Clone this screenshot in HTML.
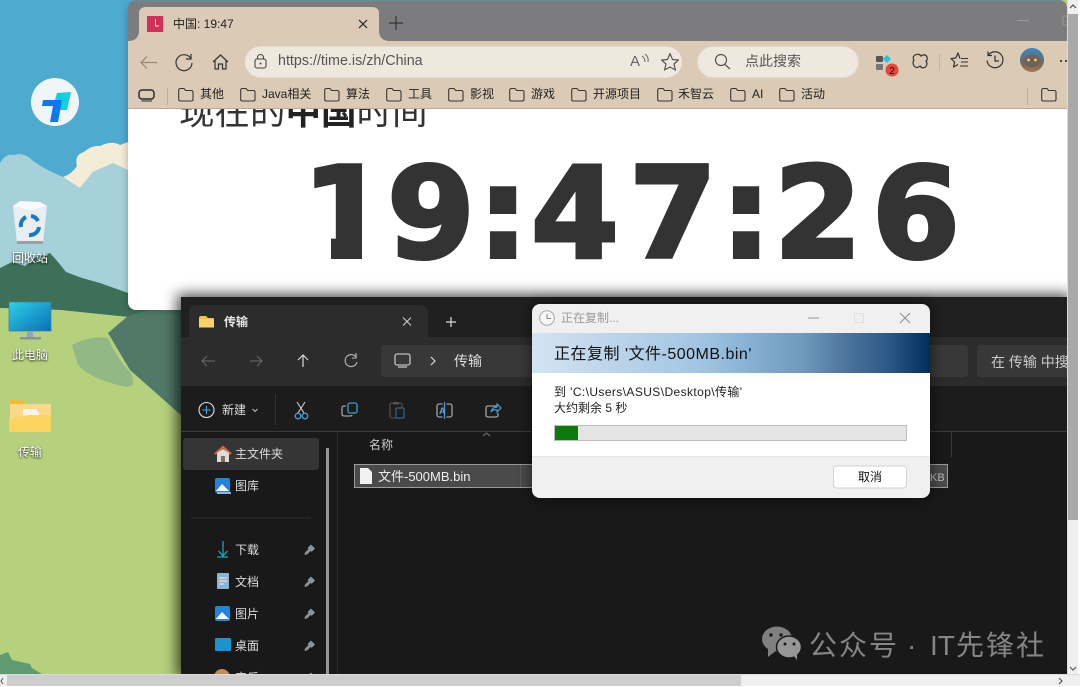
<!DOCTYPE html>
<html><head><meta charset="utf-8"><style>
html,body{margin:0;padding:0;background:#eee;overflow:hidden}
svg{display:block}
text{font-family:"Liberation Sans","Noto Sans CJK SC",sans-serif}
.d{font-family:"DejaVu Sans",sans-serif}
</style></head><body>
<svg xmlns="http://www.w3.org/2000/svg" width="1080" height="687" viewBox="0 0 1080 687">
<defs>
<linearGradient id="band" x1="0" y1="0" x2="1" y2="0"><stop offset="0" stop-color="#d4e3f2"/><stop offset=".2" stop-color="#bcd4ea"/><stop offset=".42" stop-color="#a3c5e3"/><stop offset=".52" stop-color="#8cb5d8"/><stop offset=".68" stop-color="#6f99bd"/><stop offset=".8" stop-color="#4a7299"/><stop offset=".9" stop-color="#2a5886"/><stop offset="1" stop-color="#002d5c"/></linearGradient>
<linearGradient id="mon" x1="0" y1="0" x2="1" y2="1"><stop offset="0" stop-color="#2ed0e6"/><stop offset="1" stop-color="#0a6fb8"/></linearGradient>
<linearGradient id="ava" x1="0" y1="0" x2="0" y2="1"><stop offset="0" stop-color="#3b86c9"/><stop offset=".6" stop-color="#6d6a5f"/><stop offset="1" stop-color="#a9744a"/></linearGradient>
<clipPath id="win"><rect x="0" y="0" width="1067" height="674"/></clipPath>
<clipPath id="brw"><rect x="128" y="0" width="939" height="310" rx="8"/></clipPath>
<clipPath id="cnt"><rect x="128" y="109" width="939" height="188"/></clipPath>
<clipPath id="exp"><rect x="181" y="297" width="886" height="377"/></clipPath>
<clipPath id="one"><polygon points="295,145 362,145 362,270 331,270 331,195 295,195"/></clipPath>
<clipPath id="dlg"><rect x="532" y="304" width="398" height="194" rx="8"/></clipPath>
<filter id="ds" x="-20%" y="-20%" width="140%" height="140%"><feGaussianBlur stdDeviation="6"/></filter>
<filter id="es" x="-10%" y="-20%" width="120%" height="140%"><feGaussianBlur stdDeviation="7"/></filter>
<filter id="bs" x="-10%" y="-10%" width="120%" height="120%"><feGaussianBlur stdDeviation="4"/></filter>
<filter id="ts" x="-20%" y="-40%" width="140%" height="180%"><feGaussianBlur stdDeviation="1"/></filter>
<g id="fold"><path d="M.7 3.2Q.7 1.5 2.4 1.5H6L7.6 3.5H13.3Q15 3.5 15 5.2V12.3Q15 14 13.3 14H2.4Q.7 14 .7 12.3Z" fill="none" stroke="#3a3631" stroke-width="1.1"/></g>
<g id="pin"><path d="M3 9.5L6.5 6 5.8 4.8 9 1.5 13 5.5 9.8 8.7 8.6 8 5 11.5 2.5 12Z" fill="#8c939b"/></g>
</defs>

<!-- wallpaper -->
<g clip-path="url(#win)">
<rect width="1067" height="674" fill="#b5d17e"/>
<rect width="190" height="300" fill="#4faad0"/>
<path d="M0 163Q6 153 14 155 24 152 32 160 42 168 63 177L80 188 93 172 113 163 190 168V320H0Z" fill="#a6d1da"/>
<path d="M63 177Q72 174 77 166 74 155 84 152 92 145 100 146 112 140 120 145L128 142 135 172 128 170 113 163 93 172 80 188Z" fill="#f3ecd6"/>
<path d="M0 268L12 262 25 266 34 258 50 253 58 262 66 272 82 278 100 283 128 293 190 298V330L128 317 60 310 0 308Z" fill="#3e6f58"/>
<path d="M0 308L60 310 128 317 108 333 130 370 180 415V690H0Z" fill="#b5d17e"/>
<path d="M108 333L128 316 182 300V416L130 370Z" fill="#517869"/>
<path d="M72 345Q92 335 108 338 118 360 130 372 140 392 118 385 90 378 78 365Z" fill="#93b886"/>
<path d="M0 674V655L8 652 12 660 30 664 35 674ZM22 674L32 668 42 674Z" fill="#5f9a72"/>
<rect x="128" y="4" width="939" height="306" rx="8" fill="#000" opacity=".28" filter="url(#bs)"/>

<!-- desktop icons -->
<circle cx="55" cy="102" r="24" fill="#f0f6f8"/>
<path d="M57 93L71 92 67 110 60 110 62 100 55 100Z" fill="#10cfe0"/>
<path d="M42 106L43 100 62 100 58 122 50 122 53 106Z" fill="#0b78f0"/>

<path d="M13 206L47 206 43 243H17Z" fill="#e9eef2"/><path d="M13 206L20 201 40 202 47 206 30 210Z" fill="#fafafa"/>
<rect x="17" y="241" width="26" height="3" fill="#9aa0a2"/>
<g fill="none" stroke="#1a7ac8" stroke-width="4"><path d="M21 227A9 9 0 0 1 26 217"/><path d="M31 216A9 9 0 0 1 38 221"/><path d="M39 227A9 9 0 0 1 29 235"/></g>
<text x="30" y="263" text-anchor="middle" font-size="12" fill="#000" filter="url(#ts)">回收站</text>
<text x="30" y="262" text-anchor="middle" font-size="12" fill="#fff">回收站</text>

<rect x="9" y="302" width="42" height="29" fill="url(#mon)" stroke="#3c7f9a" stroke-width=".7"/>
<rect x="27" y="331" width="6" height="7" fill="#8fa8b0"/><rect x="20" y="337" width="21" height="2.5" fill="#8a9396"/>
<text x="30" y="360" text-anchor="middle" font-size="12" fill="#000" filter="url(#ts)">此电脑</text>
<text x="30" y="359" text-anchor="middle" font-size="12" fill="#fff">此电脑</text>

<path d="M9 402Q9 400 11 400H22L26 404H49Q51 404 51 406V415H9Z" fill="#f3b93b"/>
<rect x="10" y="404" width="41" height="20" fill="#fbd98a"/>
<path d="M23 409H36L39 413V419H23Z" fill="#f7f4f0"/>
<path d="M9 419Q20 416 30 415L51 415V431Q51 432 49 432H11Q9 432 9 430Z" fill="#fdd460"/>
<text x="30" y="457" text-anchor="middle" font-size="12" fill="#000" filter="url(#ts)">传输</text>
<text x="30" y="456" text-anchor="middle" font-size="12" fill="#fff">传输</text>

<!-- browser -->
<g clip-path="url(#brw)">
<rect x="128" y="0" width="939" height="42" fill="#7c7c7e"/>
<rect x="128" y="0" width="939" height="1.5" fill="#6a8a94"/>
<path d="M128 41Q138 41 139 32V14Q139 7 146 7H372Q379 7 379 14V32Q380 41 390 41V109H128Z" fill="#dbcab5"/>
<rect x="128" y="41" width="939" height="67" fill="#dbcab5"/>
<rect x="128" y="108" width="939" height="1.5" fill="#b9a995"/>
<rect x="128" y="109" width="939" height="201" fill="#fff"/>
</g>
<rect x="147" y="16" width="16" height="16" fill="#d1305a"/>
<path d="M155.5 19V26H159" fill="none" stroke="#f5d9a0" stroke-width="1"/>
<text x="173" y="28" font-size="12" fill="#222">中国: 19:47</text>
<path d="M359 20L367 28M367 20L359 28" stroke="#222" stroke-width="1.2"/>
<path d="M396 16V30M389 23H403" stroke="#333" stroke-width="1.2"/>

<path d="M157 62.5H141M147 56.5L141 62.5 147 68.5" fill="none" stroke="#95897c" stroke-width="1.2"/>
<path d="M190.5 58A8 8 0 1 0 192 63M191 54V59H186" fill="none" stroke="#333" stroke-width="1.2"/>
<path d="M213 62L220.5 55 228 62M215 60.5V69H218.5V64H222.5V69H226V60.5" fill="none" stroke="#333" stroke-width="1.2" stroke-linejoin="round"/>
<rect x="245" y="46.500" width="437" height="31" rx="15.500" fill="#efe8de"/>
<rect x="255" y="59" width="11" height="9" rx="2" fill="none" stroke="#444" stroke-width="1.1"/>
<path d="M257.500 59V57.500A3 3 0 0 1 263.500 57.500V59" fill="none" stroke="#444" stroke-width="1.1"/><circle cx="260.500" cy="63.500" r="1" fill="#444"/>
<text x="278" y="65" font-size="14.300" fill="#555">https://time.is/zh/China</text>
<text x="630" y="66" font-size="15" fill="#666">A</text>
<path d="M642 56Q645 58 645 62M645 54Q649 57 648 62" fill="none" stroke="#666"/>
<path d="M670 53.500L672.500 59.500 678.500 60 674 64 675.500 70 670 67 664.500 70 666 64 661.500 60 667.500 59.500Z" fill="none" stroke="#555" stroke-width="1.200" stroke-linejoin="round"/>
<rect x="697.500" y="46.500" width="161" height="31" rx="15.500" fill="#efe8de" stroke="#e3d8ca"/>
<circle cx="721" cy="60" r="5.500" fill="none" stroke="#555" stroke-width="1.200"/><path d="M725 64.500L730 69" stroke="#555" stroke-width="1.200"/>
<text x="745" y="66" font-size="14" fill="#555">点此搜索</text>
<rect x="876" y="56" width="7" height="6" rx="1" fill="#555"/><rect x="876" y="64" width="7" height="6" rx="1" fill="#777"/>
<path d="M887 55L891 59 887 63 883 59Z" fill="#1cc4e8"/>
<circle cx="892" cy="70" r="6.500" fill="#e8453c"/><text x="892" y="74" text-anchor="middle" font-size="10" fill="#111">2</text>
<path d="M915 55Q919 53 921 56 925 53 927 57 928 60 926 61 928 64 925.500 67 922 69 920 66 917 69 914 66 912 62 914 60.500 912 57 915 55Z" fill="none" stroke="#333" stroke-width="1.200"/>
<rect x="939" y="54" width="1" height="17" fill="#c4b5a2"/>
<path d="M960 58.500L958 53 955.800 58 951 58.600 954.600 62 953.500 67 958 64.500" fill="none" stroke="#333" stroke-width="1.200" stroke-linejoin="round"/><path d="M961 58.500H968M961 62H968M960 66H968" stroke="#333"/>
<path d="M988.500 55A8 8 0 1 1 987 60.500M988 51.500V55.500H992" fill="none" stroke="#333" stroke-width="1.200"/>
<path d="M995 55.500V61H999" fill="none" stroke="#333" stroke-width="1.200"/>
<circle cx="1032" cy="60" r="12" fill="url(#ava)"/><ellipse cx="1032" cy="61" rx="8" ry="6.500" fill="#6f6254"/><circle cx="1028.500" cy="60" r="1.400" fill="#e8d36a"/><circle cx="1035.500" cy="60" r="1.400" fill="#e8d36a"/>
<circle cx="1061" cy="61" r="1" fill="#222"/><circle cx="1066" cy="61" r="1" fill="#222"/>
<path d="M1017 20.500H1029" stroke="#999"/><rect x="1063" y="16" width="8" height="9" fill="none" stroke="#999"/>

<rect x="139" y="90" width="15" height="9" rx="3" fill="none" stroke="#2a2a2a" stroke-width="1.500"/><path d="M141.500 101H152" stroke="#2a2a2a"/>
<rect x="167" y="88" width="1" height="17" fill="#bfb09c"/>
<g font-size="12" fill="#222">
<use href="#fold" x="178" y="87"/><text x="200" y="98">其他</text>
<use href="#fold" x="240" y="87"/><text x="262" y="98">Java相关</text>
<use href="#fold" x="324" y="87"/><text x="346" y="98">算法</text>
<use href="#fold" x="386" y="87"/><text x="408" y="98">工具</text>
<use href="#fold" x="448" y="87"/><text x="470" y="98">影视</text>
<use href="#fold" x="509" y="87"/><text x="531" y="98">游戏</text>
<use href="#fold" x="571" y="87"/><text x="593" y="98">开源项目</text>
<use href="#fold" x="657" y="87"/><text x="678" y="98">禾智云</text>
<use href="#fold" x="730" y="87"/><text x="752" y="98">AI</text>
<use href="#fold" x="779" y="87"/><text x="801" y="98">活动</text>
<rect x="1027" y="88" width="1" height="17" fill="#bfb09c"/>
<use href="#fold" x="1041" y="87"/>
</g>

<!-- page content -->
<g clip-path="url(#cnt)">
<text x="179" y="124" font-size="35.500" fill="#333">现在的<tspan font-weight="700" fill="#222">中国</tspan>时间</text>
<g fill="#333" stroke="#333" stroke-width="4" font-size="126" font-weight="700" text-anchor="middle">
<g clip-path="url(#one)"><text class="d" transform="translate(346 257)">1</text></g>
<text class="d" transform="translate(431 257)">9</text>
<text class="d" transform="translate(503 257)">:</text>
<text class="d" transform="translate(575 257)">4</text>
<text class="d" transform="translate(673 257)">7</text>
<text class="d" transform="translate(746 257)">:</text>
<text class="d" transform="translate(818 257)">2</text>
<text class="d" transform="translate(916 257)">6</text>
</g>
</g>

<!-- explorer shadow -->
<rect x="177" y="294" width="894" height="384" fill="#000" opacity=".7" filter="url(#es)"/>
</g>

<!-- explorer -->
<g clip-path="url(#exp)">
<rect x="181" y="297" width="886" height="377" fill="#191919"/>
<rect x="181" y="297" width="886" height="40" fill="#202020"/>
<path d="M189 337V313Q189 305 197 305H420Q428 305 428 313V337Z" fill="#2c2c2c"/>
<rect x="181" y="337" width="886" height="49" fill="#2c2c2c"/>
<rect x="181" y="386" width="886" height="45" fill="#1c1c1c"/>
<rect x="181" y="431" width="886" height="1" fill="#3a3a3a"/>
<path d="M199 318Q199 316 201 316H206L208 318H213Q214 318 214 319V327H199Z" fill="#f4c04d"/><rect x="199" y="319" width="15" height="8.500" fill="#fad368"/>
<text x="224" y="326" font-size="12" font-weight="700" fill="#e6e6e6">传输</text>
<path d="M403 317.500L411 325.500M411 317.500L403 325.500" stroke="#ccc" stroke-width="1.100"/>
<path d="M451 317V327M446 322H456" stroke="#ddd" stroke-width="1.200"/>
<path d="M215 361H202M207 356L202 361 207 366" fill="none" stroke="#6a6a6a" stroke-width="1.100"/>
<path d="M250 361H262M257 356L262 361 257 366" fill="none" stroke="#6a6a6a" stroke-width="1.100"/>
<path d="M303 367V355M298 360L303 355 308 360" fill="none" stroke="#d8d8d8" stroke-width="1.200"/>
<path d="M356 357A6 6 0 1 0 357 362M356 353V358H352" fill="none" stroke="#bbb" stroke-width="1.100"/>
<rect x="381" y="345" width="587" height="32" rx="4" fill="#383838"/>
<rect x="977" y="345" width="92" height="32" rx="4" fill="#383838"/>
<rect x="395" y="354" width="15" height="11" rx="2" fill="none" stroke="#ddd" stroke-width="1.100"/><path d="M398 367H407" stroke="#ddd" stroke-width="1.100"/>
<path d="M431 357L435 361 431 365" fill="none" stroke="#ddd" stroke-width="1.200"/>
<text x="454" y="366" font-size="14" fill="#ddd">传输</text>
<text x="991" y="367" font-size="14" fill="#ccc">在 传输 中搜</text>
<circle cx="206.500" cy="410" r="7.500" fill="none" stroke="#ddd" stroke-width="1.100"/><path d="M206.500 406V414M202.500 410H210.500" stroke="#58a6d8" stroke-width="1.100"/>
<text x="222" y="414" font-size="12" fill="#ddd">新建</text>
<path d="M252.500 409L255 411.500 257.500 409" fill="none" stroke="#bbb"/>
<rect x="275" y="394" width="1" height="31" fill="#333"/>
<path d="M297 402L304 413M305 402L298 413" stroke="#ccc" stroke-width="1.100"/><circle cx="298" cy="416" r="2.800" fill="none" stroke="#4c9ad0" stroke-width="1.300"/><circle cx="305" cy="416" r="2.800" fill="none" stroke="#4c9ad0" stroke-width="1.300"/>
<rect x="348" y="403" width="9" height="10" rx="2" fill="none" stroke="#4c9ad0" stroke-width="1.300"/><path d="M346 406H344Q342 406 342 408V414Q342 416 344 416H350Q352 416 352 415" fill="none" stroke="#bbb" stroke-width="1.100"/>
<rect x="390" y="403" width="12" height="15" rx="2" fill="none" stroke="#555" stroke-width="1.100"/><rect x="396" y="408" width="8" height="10" rx="1" fill="#1c1c1c" stroke="#34648a" stroke-width="1.200"/><rect x="393" y="402" width="6" height="2.500" fill="#555"/>
<rect x="437" y="404" width="15" height="13" rx="2" fill="none" stroke="#bbb" stroke-width="1.100"/><rect x="442.500" y="402" width="4" height="17" fill="#1c1c1c"/>
<path d="M444.500 402V419" stroke="#4c9ad0" stroke-width="1.300"/><text x="439" y="414" font-size="9" font-weight="700" fill="#5aa6dc">A</text>
<path d="M497 406H488Q486 406 486 408V415Q486 417 488 417H496Q498 417 498 415V413" fill="none" stroke="#bbb" stroke-width="1.100"/><path d="M491 412Q492 407 497 407V404L501 408 497 412V410Q493 409 491 412Z" fill="none" stroke="#4c9ad0" stroke-width="1.200"/>

<rect x="183" y="438" width="136" height="32" rx="3" fill="#353535"/>
<path d="M215 454L223 447 231 454" fill="none" stroke="#d96a4a" stroke-width="2"/><path d="M217 453V462H229V453L223 449Z" fill="#dcdcdc"/><rect x="221" y="456" width="4" height="6" fill="#8a6a5a"/>
<text x="235" y="458" font-size="12" fill="#ddd">主文件夹</text>
<rect x="215" y="478" width="15" height="15" rx="2" fill="#1f86e0"/><path d="M216 491L222 484 229 491Z" fill="#fff"/><rect x="217" y="492" width="14" height="2" fill="#8fb4d8"/>
<text x="235" y="490" font-size="12" fill="#ddd">图库</text>
<rect x="191" y="517.500" width="120" height="1" fill="#2e2e2e"/>
<rect x="326" y="448" width="3" height="226" fill="#969696"/>
<rect x="337" y="432" width="1" height="242" fill="#2a2a2a"/>
<path d="M223 541V555M218.500 551L223 556 227.500 551" fill="none" stroke="#1eaec4" stroke-width="1.200"/><path d="M217 557H228" stroke="#1eaec4" stroke-width="1.200"/>
<text x="235" y="554" font-size="12" fill="#ddd">下载</text><use href="#pin" x="302" y="543"/>
<rect x="217" y="573" width="12" height="16" rx="1" fill="#8fb2d0"/><path d="M219 578H227M219 581H227M219 584H224" stroke="#e8eef4"/>
<text x="235" y="586" font-size="12" fill="#ddd">文档</text><use href="#pin" x="302" y="575"/>
<rect x="215" y="606" width="15" height="15" rx="2" fill="#1f86e0"/><path d="M216 619L222 612 229 619Z" fill="#fff"/>
<text x="235" y="618" font-size="12" fill="#ddd">图片</text><use href="#pin" x="302" y="607"/>
<rect x="215" y="638" width="16" height="13" rx="1" fill="#1c93cf"/>
<text x="235" y="650" font-size="12" fill="#ddd">桌面</text><use href="#pin" x="302" y="639"/>
<circle cx="222" cy="677" r="8" fill="#c58a55"/>
<text x="235" y="682" font-size="12" fill="#ddd">音乐</text><use href="#pin" x="302" y="671"/>

<text x="369" y="449" font-size="12" fill="#ccc">名称</text>
<path d="M483 436L486.500 433 490 436" fill="none" stroke="#777"/>
<rect x="951" y="432" width="1" height="25" fill="#3a3a3a"/>
<rect x="354.500" y="464.500" width="593" height="23" fill="#4a4a4a" stroke="#9a9a9a"/>
<rect x="520" y="465" width="1" height="22" fill="#5a5a5a"/>
<path d="M360 468H368L372 472V484H360Z" fill="#f2f2f2"/>
<text x="378" y="481" font-size="13" fill="#eee">文件-500MB.bin</text>
<text x="930" y="481" font-size="11" fill="#bbb">KB</text>

<g fill="#808080">
<ellipse cx="777" cy="639" rx="15" ry="12.500"/><path d="M768 648L768 657 777 650Z"/>
<ellipse cx="789" cy="647" rx="12.500" ry="11" stroke="#191919" stroke-width="1.500" fill="#969696"/><path d="M794 656L797 660 797 654Z" fill="#969696"/>
<circle cx="771" cy="635" r="1.700" fill="#191919"/><circle cx="781" cy="635" r="1.700" fill="#191919"/><circle cx="785" cy="644" r="1.500" fill="#191919"/><circle cx="794" cy="644" r="1.500" fill="#191919"/>
</g>
<g font-size="28" fill="#858585">
<text x="809" y="655" letter-spacing="2">公众号</text>
<text x="907" y="655">·</text>
<text x="930" y="655">IT</text>
<text x="956" y="655" letter-spacing="2">先锋社</text>
</g>
</g>

<!-- dialog -->
<rect x="530" y="302" width="402" height="198" rx="9" fill="#000" opacity=".45" filter="url(#ds)"/>
<g clip-path="url(#dlg)">
<rect x="532" y="304" width="398" height="29" fill="#f0f0f0"/>
<rect x="532" y="333" width="398" height="40" fill="url(#band)"/>
<rect x="532" y="373" width="398" height="83" fill="#fff"/>
<rect x="532" y="456" width="398" height="42" fill="#f0f0f0"/>
<rect x="532" y="456" width="398" height="1" fill="#e6e6e6"/>
</g>
<circle cx="547" cy="318" r="7.300" fill="#f7f7f7" stroke="#a8a8a8"/><path d="M547 314V318.500H551" fill="none" stroke="#888"/>
<text x="561" y="322" font-size="12" fill="#9a9a9a">正在复制...</text>
<path d="M808 318H819" stroke="#999"/><rect x="854.500" y="313.500" width="9" height="9" rx="1" fill="none" stroke="#e0e0e0"/>
<path d="M900 313L910 323M910 313L900 323" stroke="#8f8f8f"/>
<text x="554" y="359" font-size="16" letter-spacing=".5" fill="#111">正在复制 '文件-500MB.bin'</text>
<text x="554" y="396" font-size="12" letter-spacing=".4" fill="#222">到 'C:\Users\ASUS\Desktop\传输'</text>
<text x="554" y="412" font-size="12" fill="#222">大约剩余 5 秒</text>
<rect x="554.500" y="425.500" width="352" height="15" fill="#e4e4e4" stroke="#bcbcbc"/>
<rect x="555" y="426" width="23" height="14" fill="#0e7a0d"/>
<rect x="833.500" y="466" width="73" height="22" rx="3" fill="#fff" stroke="#d2d2d2"/>
<text x="870" y="481" text-anchor="middle" font-size="12" fill="#111">取消</text>

<!-- outer scrollbars -->
<rect x="1067" y="0" width="13" height="687" fill="#efefef"/>
<rect x="1067" y="0" width="1" height="674" fill="#dcdcdc"/>
<rect x="1068" y="14" width="10" height="506" fill="#a9a9a9"/>
<rect x="1078" y="0" width="2" height="687" fill="#fff"/>
<path d="M1070 8L1073 5 1076 8" fill="none" stroke="#555" stroke-width="1.200"/>
<path d="M1070 667L1073 670 1076 667" fill="none" stroke="#555" stroke-width="1.200"/>
<rect x="0" y="674" width="1080" height="13" fill="#efefef"/>
<rect x="0" y="674" width="1080" height="1" fill="#dcdcdc"/>
<rect x="7" y="675" width="734" height="11" fill="#cdcdcd"/>
<rect x="0" y="686" width="1080" height="1" fill="#fff"/>
<path d="M1059 678L1062 681 1059 684" fill="none" stroke="#555" stroke-width="1.200"/>
<path d="M3 678L1 681 3 684" fill="none" stroke="#555" stroke-width="1"/>
</svg>
</body></html>
